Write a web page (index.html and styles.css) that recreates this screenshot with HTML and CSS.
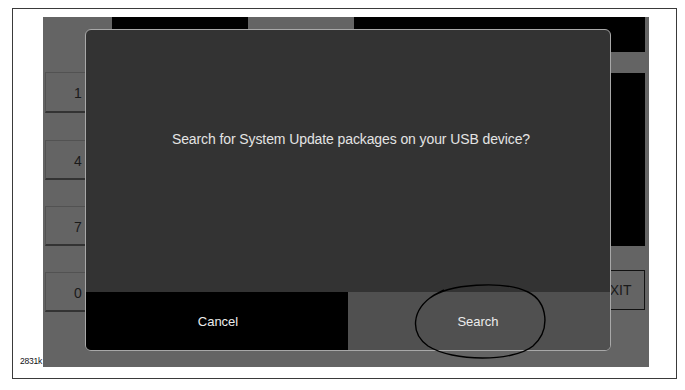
FILE: index.html
```html
<!DOCTYPE html>
<html>
<head>
<meta charset="utf-8">
<link rel="stylesheet" href="styles.css">
</head>
<body>
<div class="frame">
  <div class="label">2831k</div>
  <div class="screen">
    <div class="topbar">
      <div class="bar bar-left"></div>
      <div class="bar bar-right"></div>
    </div>
    <div class="main">
      <div class="keypad">
        <div class="key">1</div>
        <div class="key">4</div>
        <div class="key">7</div>
        <div class="key">0</div>
      </div>
      <div class="side">
        <div class="panel"></div>
        <div class="exit">EXIT</div>
      </div>
    </div>
    <div class="dialog">
      <div class="message">Search for System Update packages on your USB device?</div>
      <div class="actions">
        <div class="btn btn-cancel">Cancel</div>
        <div class="btn btn-search">Search</div>
      </div>
    </div>
  </div>
  <svg class="circle" width="144" height="82" viewBox="0 0 144 82">
    <path d="M 22 18 C 40 4, 95 0, 120 12 C 140 22, 143 50, 125 66 C 105 82, 45 82, 20 66 C 2 53, 3 30, 26 15 L 36 10" fill="none" stroke="#000" stroke-width="1.4"/>
  </svg>
</div>
</body>
</html>
```
FILE: styles.css
```css
html, body {
  margin: 0;
  padding: 0;
  background: #ffffff;
}
body {
  font-family: "Liberation Sans", Arial, sans-serif;
}
.frame {
  position: relative;
  margin: 8px 0 0 12px;
  border: 1px solid #3a3a3a;
  display: flex;
  align-items: flex-start;
  padding: 8px 0 0 7px;
  box-sizing: border-box;
  height: 371px;
  width: 665px;
}
.label {
  width: 23px;
  align-self: flex-end;
  margin-bottom: 12px;
  font-size: 8.5px;
  line-height: 10px;
  color: #111;
  letter-spacing: -0.2px;
}
.screen {
  position: relative;
  width: 606px;
  height: 350px;
  background: #646464;
  box-sizing: border-box;
  padding-right: 4px;
  display: flex;
  flex-direction: column;
}
.topbar {
  display: flex;
  height: 35px;
}
.bar {
  background: #000;
  height: 100%;
}
.bar-left {
  margin-left: 69px;
  width: 136px;
}
.bar-right {
  margin-left: 106px;
  flex: 1;
}
.main {
  display: flex;
  flex: 1;
}
.keypad {
  margin-left: 2px;
  padding-top: 20px;
  display: flex;
  flex-direction: column;
  gap: 26px;
  width: 64px;
}
.key {
  height: 41px;
  box-sizing: border-box;
  border: 1px solid #525252;
  border-bottom: 2px solid #333;
  display: flex;
  align-items: center;
  justify-content: center;
  font-size: 14px;
  color: #1a1a1a;
  padding-top: 2px;
  padding-left: 2px;
}
.key + .key {
  height: 40px;
}
.key:first-child {
  margin-bottom: 1px;
}
.side {
  margin-left: auto;
  width: 291px;
  display: flex;
  flex-direction: column;
  align-items: flex-end;
}
.panel {
  margin-top: 21px;
  height: 173px;
  width: 100%;
  background: #000;
}
.exit {
  margin-top: 24px;
  width: 60px;
  height: 40px;
  box-sizing: border-box;
  border: 1px solid #111;
  display: flex;
  align-items: center;
  justify-content: center;
  font-size: 14px;
  color: #1a1a1a;
  padding-left: 2px;
}
.dialog {
  position: absolute;
  left: 42px;
  top: 12px;
  width: 526px;
  height: 322px;
  box-sizing: border-box;
  border: 1px solid #a8a8a8;
  border-radius: 6px;
  background: #333333;
  overflow: hidden;
  display: flex;
  flex-direction: column;
}
.message {
  flex: 1;
  padding-top: 101px;
  padding-left: 6px;
  text-align: center;
  font-size: 14px;
  line-height: 16px;
  letter-spacing: -0.1px;
  color: #e4e4e4;
}
.actions {
  display: flex;
  height: 58px;
}
.btn {
  flex: 1;
  display: flex;
  align-items: center;
  justify-content: center;
  font-size: 13px;
  color: #ececec;
}
.btn-cancel {
  background: #000;
  flex: 0 0 260px;
  padding-left: 2px;
}
.btn-search {
  background: #505050;
  padding-right: 2px;
}
.circle {
  position: absolute;
  left: 395px;
  top: 271px;
}
```
